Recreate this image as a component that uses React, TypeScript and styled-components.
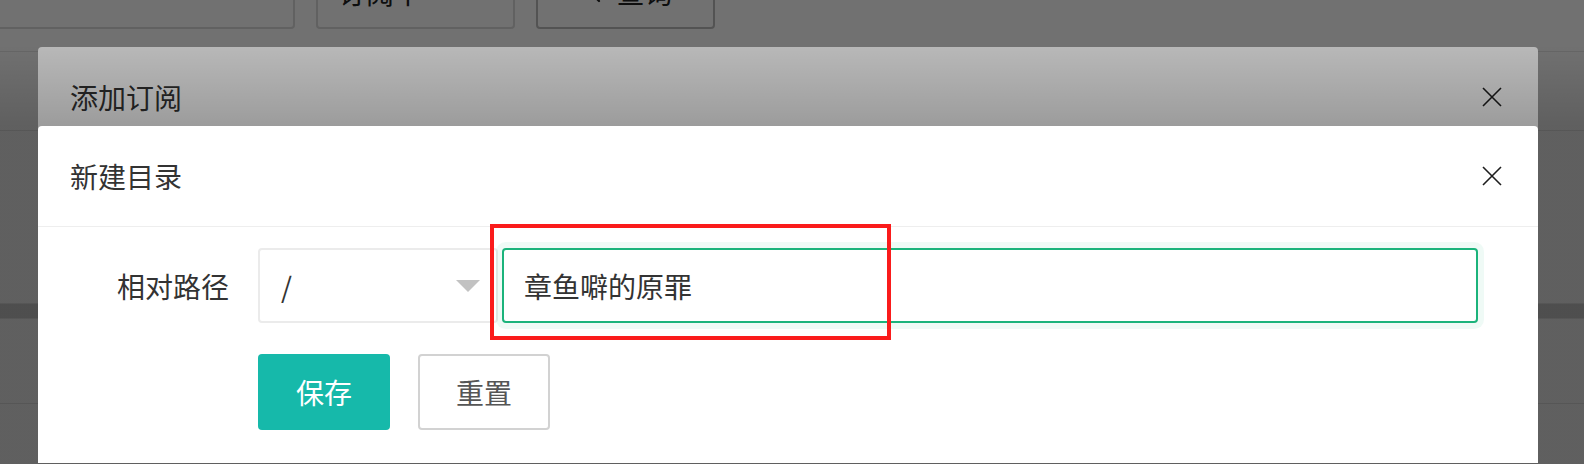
import styled, { createGlobalStyle } from "styled-components";
import { Search } from "lucide-react";

const GlobalStyle = createGlobalStyle`
  html, body {
    margin: 0;
    padding: 0;
  }

  body {
    font-family: "Noto Sans CJK SC", "Noto Sans", sans-serif;
    background: #fff;
  }
`;

const Screen = styled.div`
  position: relative;
  width: 1584px;
  height: 464px;
  overflow: hidden;
  background: #fff;
`;

/* page behind the dialogs */

const Toolbar = styled.div`
  display: flex;
  gap: 21px;
  height: 74px;
  margin: -45px 0 0 -10px;
`;

const SearchField = styled.div`
  width: 305px;
  box-sizing: border-box;
  border: 2px solid #dcdcdc;
  border-radius: 4px;
`;

const StatusSelect = styled.div`
  width: 199px;
  box-sizing: border-box;
  display: flex;
  align-items: center;
  padding-left: 20px;
  border: 2px solid #dcdcdc;
  border-radius: 4px;
  font-size: 28px;
  color: #222;
`;

const QueryButton = styled.button`
  width: 179px;
  box-sizing: border-box;
  display: flex;
  align-items: center;
  justify-content: center;
  gap: 14px;
  border: 2px solid #bdbdbd;
  border-radius: 4px;
  background: #fff;
  font-family: inherit;
  font-size: 28px;
  color: #222;
`;

const Table = styled.div`
  margin-top: 22px;
`;

const TableRow = styled.div<{ $height: number; $fill?: string }>`
  height: ${({ $height }) => $height}px;
  border-top: 1px solid #e6e6e6;
  background: ${({ $fill }) => $fill ?? "transparent"};
`;

/* masks */

const PageMask = styled.div`
  position: absolute;
  inset: 0;
  background: rgba(0, 0, 0, 0.39);
`;

const DialogMask = styled.div`
  position: absolute;
  inset: 0;
  background: linear-gradient(
    180deg,
    rgba(0, 0, 0, 0.28) 10%,
    rgba(0, 0, 0, 0.39) 27%
  );
`;

/* dialogs */

const Dialog = styled.section<{ $top: number; $height: number }>`
  position: absolute;
  left: 38px;
  top: ${({ $top }) => $top}px;
  width: 1500px;
  height: ${({ $height }) => $height}px;
  background: #fff;
  border-radius: 4px 4px 0 0;
`;

const DialogHeader = styled.header`
  height: 100px;
  display: flex;
  align-items: center;
  justify-content: space-between;
  padding: 0 36px 0 32px;
  border-bottom: 1px solid #eee;
`;

const DialogTitle = styled.h2`
  margin: 0;
  font-size: 28px;
  font-weight: 400;
  color: #333;
`;

const CloseButton = styled.button`
  width: 20px;
  height: 20px;
  padding: 0;
  border: none;
  background: none;
  display: flex;
`;

const DialogBody = styled.div`
  padding-top: 21px;
`;

const FormRow = styled.div`
  display: flex;
  align-items: center;
  height: 75px;
`;

const FieldLabel = styled.label`
  width: 220px;
  box-sizing: border-box;
  padding-right: 29px;
  text-align: right;
  font-size: 28px;
  color: #333;
`;

const PathSelect = styled.div`
  width: 240px;
  height: 75px;
  box-sizing: border-box;
  display: flex;
  align-items: center;
  justify-content: space-between;
  padding: 0 16px 0 21px;
  border: 2px solid #ebebeb;
  border-radius: 4px;
  font-size: 28px;
  color: #333;
`;

const Caret = styled.span`
  width: 0;
  height: 0;
  border-left: 12px solid transparent;
  border-right: 12px solid transparent;
  border-top: 12px solid #c2c2c2;
`;

const NameInput = styled.input`
  width: 976px;
  height: 75px;
  box-sizing: border-box;
  margin-left: 4px;
  padding: 0 20px;
  border: 2px solid #1bb37b;
  border-radius: 4px;
  box-shadow: 0 0 0 6px rgba(27, 179, 123, 0.07);
  outline: none;
  font-family: inherit;
  font-size: 28px;
  color: #333;
`;

const Actions = styled.div`
  display: flex;
  gap: 28px;
  margin: 31px 0 0 220px;
`;

const ActionButton = styled.button<{ $primary?: boolean }>`
  width: 132px;
  height: 76px;
  box-sizing: border-box;
  border-radius: 4px;
  border: ${({ $primary }) => ($primary ? "none" : "2px solid #d2d2d2")};
  background: ${({ $primary }) => ($primary ? "#16b9aa" : "#fff")};
  color: ${({ $primary }) => ($primary ? "#fff" : "#555")};
  font-family: inherit;
  font-size: 28px;
`;

/* red highlight drawn over the form */
const Highlight = styled.div`
  position: absolute;
  left: 490px;
  top: 224px;
  width: 401px;
  height: 116px;
  box-sizing: border-box;
  border: 4px solid #fa1b1b;
  pointer-events: none;
`;

function CloseIcon() {
  return (
    <svg width="20" height="20" viewBox="0 0 20 20">
      <path d="M1 1 L19 19 M19 1 L1 19" stroke="#1e1e1e" strokeWidth="1.6" />
    </svg>
  );
}

export default function App() {
  return (
    <>
      <GlobalStyle />
      <Screen>
        <Toolbar>
          <SearchField />
          <StatusSelect>订阅中</StatusSelect>
          <QueryButton>
            <Search size={24} strokeWidth={2.2} color="#222" />
            查询
          </QueryButton>
        </Toolbar>
        <Table>
          <TableRow $height={78} />
          <TableRow $height={172} />
          <TableRow $height={14} $fill="#d2d2d2" />
          <TableRow $height={84} />
          <TableRow $height={64} />
        </Table>

        <PageMask />

        <Dialog $top={47} $height={300}>
          <DialogHeader>
            <DialogTitle>添加订阅</DialogTitle>
            <CloseButton>
              <CloseIcon />
            </CloseButton>
          </DialogHeader>
        </Dialog>

        <DialogMask />

        <Dialog $top={126} $height={337}>
          <DialogHeader>
            <DialogTitle>新建目录</DialogTitle>
            <CloseButton>
              <CloseIcon />
            </CloseButton>
          </DialogHeader>
          <DialogBody>
            <FormRow>
              <FieldLabel>相对路径</FieldLabel>
              <PathSelect>
                /
                <Caret />
              </PathSelect>
              <NameInput value="章鱼噼的原罪" readOnly />
            </FormRow>
            <Actions>
              <ActionButton $primary>保存</ActionButton>
              <ActionButton>重置</ActionButton>
            </Actions>
          </DialogBody>
        </Dialog>

        <Highlight />
      </Screen>
    </>
  );
}
